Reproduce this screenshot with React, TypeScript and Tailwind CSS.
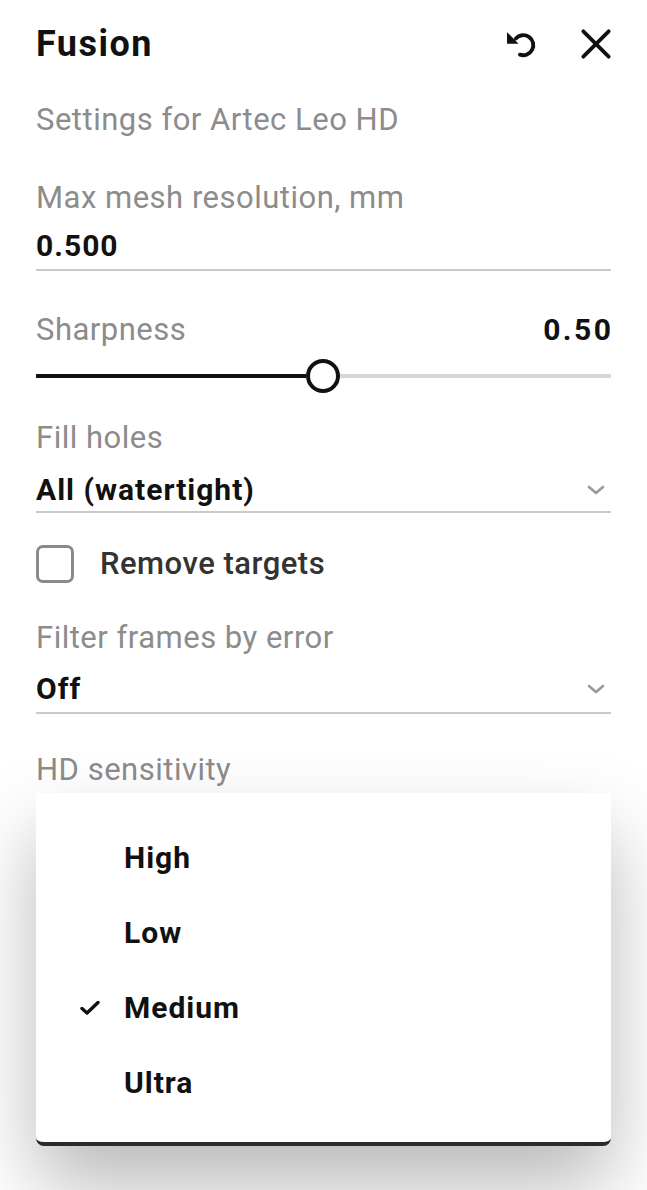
import React from "react";

function UndoIcon() {
  return (
    <svg width="33" height="33" viewBox="0 0 24 24" fill="none">
      <path d="M2.2 3 L2.2 11.4 L10.6 11.4 Z" fill="#111" />
      <path d="M8.6 7.6 A7.3 7.3 0 1 1 11.6 19.4" stroke="#111" strokeWidth="2.8" strokeLinecap="round" />
    </svg>
  );
}

function CloseIcon() {
  return (
    <svg width="38" height="38" viewBox="0 0 24 24" fill="none">
      <path d="M4 4 L20 20 M20 4 L4 20" stroke="#111" strokeWidth="2.4" strokeLinecap="round" />
    </svg>
  );
}

function Chevron() {
  return (
    <svg width="18" height="12" viewBox="0 0 18 12" fill="none">
      <path d="M2 3 L9 9 L16 3" stroke="#9a9a9a" strokeWidth="2.6" strokeLinecap="round" strokeLinejoin="round" />
    </svg>
  );
}

function Check() {
  return (
    <svg width="20" height="16" viewBox="0 0 20 16" fill="none">
      <path d="M2 8.5 L7 13 L18 2.5" stroke="#111" strokeWidth="3.4" strokeLinecap="round" strokeLinejoin="round" />
    </svg>
  );
}

const label = "text-[31px] leading-[32px] tracking-[0.5px] text-[#8c8c8c]";
const value = "text-[30px] leading-[32px] tracking-[1px] font-bold text-[#111]";

export default function App() {
  return (
    <div
      className="relative w-[647px] min-h-[1190px] bg-white overflow-hidden px-[36px] pt-[26px]"
      style={{ fontFamily: "Roboto, 'Noto Sans', sans-serif" }}
    >
      {/* Header */}
      <div className="flex items-center justify-between h-[36px]">
        <h1 className="text-[36px] leading-[36px] tracking-[1.5px] font-bold text-[#111]">Fusion</h1>
        <div className="flex items-center gap-[40px] mr-[-4px]">
          <UndoIcon />
          <CloseIcon />
        </div>
      </div>

      <div className={`${label} mt-[42px]`}>Settings for Artec Leo HD</div>

      {/* Max mesh resolution */}
      <div className={`${label} mt-[46px]`}>Max mesh resolution, mm</div>
      <div className={`${value} mt-[16px] pb-[7px] border-b-2 border-[#c9c9c9]`}>0.500</div>

      {/* Sharpness */}
      <div className="flex items-center justify-between mt-[43px]">
        <span className={label}>Sharpness</span>
        <span className="text-[30px] leading-[32px] tracking-[2.5px] mr-[-2.5px] font-bold text-[#111]">0.50</span>
      </div>
      <div className="relative h-[36px] mt-[12px] flex items-center">
        <div className="h-[4px] w-[270px] bg-[#111]" />
        <div className="h-[4px] flex-1 bg-[#d6d6d6]" />
        <div className="absolute left-[270px] top-1/2 -translate-y-1/2 w-[34px] h-[34px] rounded-full border-[4px] border-[#111] bg-white" />
      </div>

      {/* Fill holes */}
      <div className={`${label} mt-[28px]`}>Fill holes</div>
      <div className={`${value} mt-[20px] pb-[5px] border-b-2 border-[#c9c9c9] flex items-center justify-between`}>
        <span>All (watertight)</span>
        <span className="pr-[6px]"><Chevron /></span>
      </div>

      {/* Remove targets */}
      <div className="flex items-center gap-[26px] mt-[32px]">
        <div className="w-[38px] h-[38px] rounded-[7px] border-[3px] border-[#8a8a8a] bg-white" />
        <span className="text-[31px] leading-[32px] tracking-[0.5px] font-medium text-[#333]">Remove targets</span>
      </div>

      {/* Filter frames */}
      <div className={`${label} mt-[39px]`}>Filter frames by error</div>
      <div className={`${value} mt-[19px] pb-[7px] border-b-2 border-[#c9c9c9] flex items-center justify-between`}>
        <span>Off</span>
        <span className="pr-[6px]"><Chevron /></span>
      </div>

      {/* HD sensitivity */}
      <div className="relative mt-[40px]">
        <div className={label}>HD sensitivity</div>
        <div className="absolute left-0 right-0 top-[39px] bg-white rounded-b-[8px] border-b-[4px] border-[#2b2b2b] pt-[27px] pb-[22px] shadow-[0_40px_80px_rgba(0,0,0,0.28)]">
          {[
            { t: "High", c: false },
            { t: "Low", c: false },
            { t: "Medium", c: true },
            { t: "Ultra", c: false },
          ].map((it) => (
            <div key={it.t} className="h-[75px] flex items-center">
              <div className="w-[88px] flex justify-end pr-[24px]">{it.c ? <Check /> : null}</div>
              <span className="text-[30px] leading-[32px] tracking-[1px] font-bold text-[#111]">{it.t}</span>
            </div>
          ))}
        </div>
      </div>
    </div>
  );
}
